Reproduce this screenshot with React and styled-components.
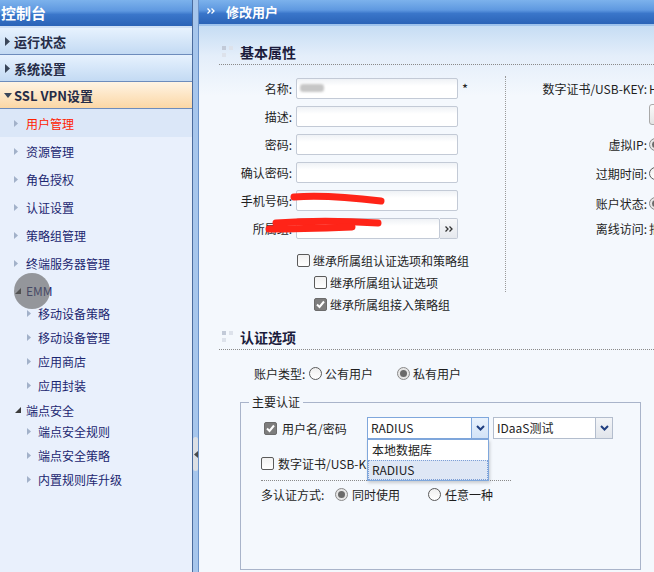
import React from "react";
import styled, { createGlobalStyle } from "styled-components";

const GlobalStyle = createGlobalStyle`
  html, body {
    margin: 0;
    padding: 0;
  }
  body {
    width: 654px;
    height: 572px;
    overflow: hidden;
    font-family: "Noto Sans CJK SC", "Noto Sans", sans-serif;
    font-size: 12px;
    color: #1e1e1e;
  }
  * {
    box-sizing: border-box;
  }
`;

const Page = styled.div`
  position: relative;
  display: flex;
  width: 654px;
  height: 572px;
  overflow: hidden;
`;

/* ---------- sidebar ---------- */

const Sidebar = styled.aside`
  width: 192px;
  flex: none;
  display: flex;
  flex-direction: column;
  background: #e9f0fc;
`;

const BarTitle = styled.div`
  height: 28px;
  padding-left: 1px;
  line-height: 25px;
  font-size: 15px;
  font-weight: bold;
  color: #fff;
  background: linear-gradient(to bottom, #7cb2ec 0%, #5e98e0 42%, #3a76ca 56%, #2a63b7 100%);
  border-bottom: 2px solid #cfe0f5;
`;

const TopItem = styled.div`
  height: 27px;
  display: flex;
  align-items: center;
  gap: ${(p) => (p.$open ? 2 : 4)}px;
  padding-left: ${(p) => (p.$open ? 4 : 5)}px;
  font-size: 13px;
  font-weight: bold;
  color: #252c47;
  border-bottom: 1px solid #6d8cbc;
  background: ${(p) =>
    p.$open
      ? "linear-gradient(to bottom, #fff4e4, #fbd7a5)"
      : "linear-gradient(to bottom, #e7f2fe, #c3daf3)"};
`;

const SubItem = styled.div`
  height: ${(p) => p.$h}px;
  display: flex;
  align-items: center;
  gap: ${(p) => p.$gap}px;
  padding-left: ${(p) => p.$indent}px;
  padding-top: ${(p) => p.$pt || 0}px;
  font-size: 12px;
  color: ${(p) => (p.$active ? "#ff2200" : "#1b2670")};
  background: ${(p) => (p.$active ? "#dbe7f8" : "transparent")};
`;

const Splitter = styled.div`
  width: 7px;
  flex: none;
  display: flex;
  flex-direction: column;
  background: #a7c6ec;
  border-left: 1px solid #4b6b9d;
  border-right: 1px solid #6c93c9;
`;

const Grip = styled.div`
  margin-top: 437px;
  height: 34px;
  display: flex;
  align-items: center;
  justify-content: center;
  background: #dcdfe4;
  border-radius: 3px;
`;

/* ---------- main ---------- */

const Main = styled.main`
  flex: 1;
  min-width: 0;
  display: flex;
  flex-direction: column;
  overflow: hidden;
  background: #f4f8fd;
`;

const MainHeader = styled.div`
  height: 26px;
  flex: none;
  display: flex;
  align-items: center;
  gap: 11px;
  padding: 0 0 2px 8px;
  font-size: 13px;
  font-weight: bold;
  color: #fff;
  background: linear-gradient(to bottom, #7cb2ec 0%, #5e98e0 42%, #3a76ca 56%, #2a63b7 100%);
  border-bottom: 2px solid #9fc3ec;
`;

const Content = styled.div`
  flex: 1;
  padding: 13px 0 0 20px;
  overflow: hidden;
  background: linear-gradient(to bottom, #c6ddf4 0px, #e4eefa 30px, #f4f8fd 70px, #f4f8fd 100%);
`;

const SectionHead = styled.div`
  height: 26px;
  margin-top: ${(p) => p.$mt || 0}px;
  display: flex;
  align-items: center;
  gap: 7px;
  padding-left: 3px;
  font-size: 14px;
  font-weight: bold;
  color: #1c1c3c;
  border-bottom: 1px dotted #8a8a8a;
`;

const Squares = styled.span`
  display: grid;
  grid-template-columns: 4px 4px;
  grid-template-rows: 4px 4px;
  gap: 3px;
  span:nth-child(1) {
    background: #c2cad8;
  }
  span:nth-child(2),
  span:nth-child(3) {
    background: #dde2eb;
  }
`;

const BasicBody = styled.div`
  display: flex;
  align-items: flex-start;
`;

const LeftCol = styled.div`
  width: 286px;
  flex: none;
  padding-top: 13px;
`;

const FormGrid = styled.div`
  display: grid;
  grid-template-columns: 73px 162px auto;
  grid-auto-rows: 21px;
  column-gap: 4px;
  row-gap: 7px;
  align-items: center;
`;

const Label = styled.span`
  text-align: right;
  white-space: nowrap;
`;

const Input = styled.input`
  width: 100%;
  height: 21px;
  min-width: 0;
  margin: 0;
  border: 1px solid #c3cad6;
  border-radius: 2px;
  background: linear-gradient(to bottom, #eff2f6, #ffffff 7px);
  outline: none;
`;

const Star = styled.span`
  font-size: 13px;
  color: #222;
`;

const GroupField = styled.div`
  display: flex;
  height: 21px;
`;

const PickBtn = styled.span`
  width: 18px;
  flex: none;
  display: flex;
  align-items: center;
  justify-content: center;
  border: 1px solid #c3cad6;
  border-left: none;
  border-radius: 0 2px 2px 0;
  background: linear-gradient(to bottom, #f7f8fa, #e6e9ee);
`;

const Checks = styled.div`
  margin-top: 10px;
`;

const CheckRow = styled.label`
  height: ${(p) => p.$h || 22}px;
  display: flex;
  align-items: center;
  gap: ${(p) => p.$gap || 3}px;
  padding-left: ${(p) => p.$indent}px;
  margin-top: ${(p) => p.$mt || 0}px;
  white-space: nowrap;
`;

const Box = styled.span`
  width: 13px;
  height: 13px;
  flex: none;
  display: flex;
  align-items: center;
  justify-content: center;
  border: 1px solid ${(p) => (p.$checked ? "#6c6c6c" : "#5a5a5a")};
  border-radius: 2px;
  background: ${(p) =>
    p.$checked ? "#7d7d7d" : "linear-gradient(to bottom, #f1f1f1, #ffffff)"};
`;

const Round = styled.span`
  width: 13px;
  height: 13px;
  flex: none;
  display: flex;
  align-items: center;
  justify-content: center;
  border: 1px solid ${(p) => (p.$checked ? "#8a8a8a" : "#5a5a5a")};
  border-radius: 50%;
  background: ${(p) =>
    p.$checked ? "#e6e6e6" : "linear-gradient(to bottom, #efefef, #ffffff)"};
  &::after {
    content: "";
    display: ${(p) => (p.$checked ? "block" : "none")};
    width: 7px;
    height: 7px;
    border-radius: 50%;
    background: #6a6a6a;
  }
`;

const RightCol = styled.div`
  width: 220px;
  flex: none;
  height: 216px;
  margin-top: 11px;
  padding-top: 2px;
  border-left: 1px dotted #9a9a9a;
`;

const RRow = styled.div`
  height: ${(p) => p.$h}px;
  display: grid;
  grid-template-columns: 141px auto;
  column-gap: 2px;
  align-items: center;
  white-space: nowrap;
`;

const MiniBtn = styled.span`
  width: 40px;
  height: 21px;
  border: 1px solid #a9a9a9;
  border-radius: 3px;
  background: linear-gradient(to bottom, #fafafa, #e4e4e4);
`;

const TypeRow = styled.div`
  height: 22px;
  margin-top: 12px;
  padding-left: 35px;
  display: flex;
  align-items: center;
`;

const FixedLabel = styled.span`
  width: ${(p) => p.$w}px;
  flex: none;
  white-space: nowrap;
`;

const Opt = styled.span`
  display: inline-flex;
  align-items: center;
  gap: ${(p) => p.$gap || 3}px;
  margin-left: ${(p) => p.$ml || 0}px;
  white-space: nowrap;
`;

const Fieldset = styled.fieldset`
  width: 401px;
  min-width: 0;
  margin: 10px 0 0 21px;
  padding: 7px 0 64px 0;
  border: 1px solid #a9b4ca;
`;

const Legend = styled.legend`
  margin-left: 8px;
  padding: 0 3px;
  font-size: 12px;
  line-height: 16px;
`;

const AuthRow = styled.div`
  height: 22px;
  display: flex;
  align-items: center;
  gap: 4px;
  padding-left: 23px;
`;

const Select = styled.div`
  position: relative;
  width: ${(p) => p.$w}px;
  height: 22px;
  flex: none;
  display: flex;
  border: 1px solid ${(p) => (p.$focus ? "#7fa7dc" : "#b3bdcd")};
  background: #fff;
`;

const SelectText = styled.span`
  flex: 1;
  padding-left: 3px;
  line-height: 20px;
  white-space: nowrap;
`;

const SelectBtn = styled.span`
  width: 17px;
  flex: none;
  display: flex;
  align-items: center;
  justify-content: center;
  border-left: 1px solid ${(p) => (p.$focus ? "#7fa7dc" : "#b3bdcd")};
  background: ${(p) =>
    p.$focus
      ? "linear-gradient(to bottom, #e9f2fd, #d2e3f7)"
      : "linear-gradient(to bottom, #f3f5f8, #e1e5eb)"};
`;

const DropList = styled.div`
  position: absolute;
  top: 21px;
  left: -1px;
  width: 122px;
  z-index: 3;
  border: 1px solid #7fa7dc;
  background: #fff;
  box-shadow: 1px 2px 3px rgba(0, 0, 0, 0.18);
`;

const DropItem = styled.div`
  height: 20px;
  padding-left: 3px;
  line-height: 18px;
  white-space: nowrap;
  border: 1px dotted ${(p) => (p.$active ? "#7c9fd6" : "transparent")};
  background: ${(p) => (p.$active ? "#dee7f5" : "#fff")};
`;

const Divider = styled.div`
  width: 250px;
  margin: 6px 0 0 20px;
  border-top: 1px dotted #8a8a8a;
`;

const Overlay = styled.svg`
  position: absolute;
  left: 0;
  top: 0;
  pointer-events: none;
`;

/* ---------- small drawings ---------- */

const TriRight = () => (
  <svg width="5" height="9" viewBox="0 0 5 9">
    <path d="M0 0 L5 4.5 L0 9Z" fill="#3a4659" />
  </svg>
);

const TriDown = () => (
  <svg width="8" height="5" viewBox="0 0 8 5">
    <path d="M0 0 H8 L4 5Z" fill="#3a4659" />
  </svg>
);

const Arrow = () => (
  <svg width="4" height="7" viewBox="0 0 4 7">
    <path d="M0 0 L4 3.5 L0 7Z" fill="#a2b1c9" />
  </svg>
);

const Corner = () => (
  <svg width="6" height="6" viewBox="0 0 6 6">
    <path d="M6 0 V6 H0Z" fill="#3c3c3c" />
  </svg>
);

const Tick = () => (
  <svg width="11" height="11" viewBox="0 0 11 11">
    <path d="M2 5.5 L4.5 8 L9 2.5" stroke="#fff" strokeWidth="2" fill="none" />
  </svg>
);

const Chevron = () => (
  <svg width="9" height="6" viewBox="0 0 9 6">
    <path d="M1 1 L4.5 4.5 L8 1" stroke="#1f3e80" strokeWidth="2" fill="none" />
  </svg>
);

const Double = ({ color }) => (
  <svg width="8" height="6" viewBox="0 0 8 6">
    <path d="M0.5 0.5 L3 3 L0.5 5.5 M4.5 0.5 L7 3 L4.5 5.5" stroke={color} strokeWidth="1.3" fill="none" />
  </svg>
);

const Check = ({ checked }) => <Box $checked={checked}>{checked && <Tick />}</Box>;

const level1 = ["资源管理", "角色授权", "认证设置", "策略组管理", "终端服务器管理"];
const emm = ["移动设备策略", "移动设备管理", "应用商店", "应用封装"];
const endpoint = ["端点安全规则", "端点安全策略", "内置规则库升级"];

export default function App() {
  return (
    <>
      <GlobalStyle />
      <Page>
        <Sidebar>
          <BarTitle>控制台</BarTitle>
          <TopItem>
            <TriRight />
            运行状态
          </TopItem>
          <TopItem>
            <TriRight />
            系统设置
          </TopItem>
          <TopItem $open>
            <TriDown />
            SSL VPN设置
          </TopItem>
          <SubItem $h={28} $indent={14} $gap={8} $active>
            <Arrow />
            用户管理
          </SubItem>
          {level1.map((t) => (
            <SubItem key={t} $h={28} $indent={14} $gap={8}>
              <Arrow />
              {t}
            </SubItem>
          ))}
          <SubItem $h={24} $pt={3} $indent={15} $gap={5}>
            <Corner />
            EMM
          </SubItem>
          {emm.map((t) => (
            <SubItem key={t} $h={24} $indent={27} $gap={7}>
              <Arrow />
              {t}
            </SubItem>
          ))}
          <SubItem $h={22} $pt={4} $indent={15} $gap={5}>
            <Corner />
            端点安全
          </SubItem>
          {endpoint.map((t) => (
            <SubItem key={t} $h={24} $indent={27} $gap={7}>
              <Arrow />
              {t}
            </SubItem>
          ))}
        </Sidebar>

        <Splitter>
          <Grip>
            <svg width="4" height="7" viewBox="0 0 4 7">
              <path d="M4 0 L0 3.5 L4 7Z" fill="#4a4a4a" />
            </svg>
          </Grip>
        </Splitter>

        <Main>
          <MainHeader>
            <Double color="#ffffff" />
            修改用户
          </MainHeader>
          <Content>
            <SectionHead>
              <Squares>
                <span />
                <span />
                <span />
                <span />
              </Squares>
              基本属性
            </SectionHead>
            <BasicBody>
              <LeftCol>
                <FormGrid>
                  <Label>名称:</Label>
                  <Input />
                  <Star>*</Star>
                  <Label>描述:</Label>
                  <Input />
                  <span />
                  <Label>密码:</Label>
                  <Input type="password" />
                  <span />
                  <Label>确认密码:</Label>
                  <Input type="password" />
                  <span />
                  <Label>手机号码:</Label>
                  <Input />
                  <span />
                  <Label>所属组:</Label>
                  <GroupField>
                    <Input />
                    <PickBtn>
                      <Double color="#333333" />
                    </PickBtn>
                  </GroupField>
                  <span />
                </FormGrid>
                <Checks>
                  <CheckRow $indent={78}>
                    <Check />
                    继承所属组认证选项和策略组
                  </CheckRow>
                  <CheckRow $indent={95}>
                    <Check />
                    继承所属组认证选项
                  </CheckRow>
                  <CheckRow $indent={95}>
                    <Check checked />
                    继承所属组接入策略组
                  </CheckRow>
                </Checks>
              </LeftCol>
              <RightCol>
                <RRow $h={20}>
                  <Label>数字证书/USB-KEY:</Label>
                  <span>HTTP</span>
                </RRow>
                <RRow $h={32}>
                  <span />
                  <MiniBtn />
                </RRow>
                <RRow $h={28}>
                  <Label>虚拟IP:</Label>
                  <Round $checked />
                </RRow>
                <RRow $h={30}>
                  <Label>过期时间:</Label>
                  <Round />
                </RRow>
                <RRow $h={31}>
                  <Label>账户状态:</Label>
                  <Round $checked />
                </RRow>
                <RRow $h={18}>
                  <Label>离线访问:</Label>
                  <span>拒绝</span>
                </RRow>
              </RightCol>
            </BasicBody>

            <SectionHead $mt={9}>
              <Squares>
                <span />
                <span />
                <span />
                <span />
              </Squares>
              认证选项
            </SectionHead>
            <TypeRow>
              <FixedLabel $w={55}>账户类型:</FixedLabel>
              <Opt>
                <Round />
                公有用户
              </Opt>
              <Opt $ml={24}>
                <Round $checked />
                私有用户
              </Opt>
            </TypeRow>

            <Fieldset>
              <Legend>主要认证</Legend>
              <AuthRow>
                <Opt $gap={5} style={{ width: 99 }}>
                  <Check checked />
                  用户名/密码
                </Opt>
                <Select $w={122} $focus>
                  <SelectText>RADIUS</SelectText>
                  <SelectBtn $focus>
                    <Chevron />
                  </SelectBtn>
                  <DropList>
                    <DropItem>本地数据库</DropItem>
                    <DropItem $active>RADIUS</DropItem>
                  </DropList>
                </Select>
                <Select $w={120}>
                  <SelectText>IDaaS测试</SelectText>
                  <SelectBtn>
                    <Chevron />
                  </SelectBtn>
                </Select>
              </AuthRow>
              <CheckRow $indent={20} $gap={4} $mt={13}>
                <Check />
                数字证书/USB-KEY
              </CheckRow>
              <Divider />
              <CheckRow as="div" $indent={20} $gap={0} $mt={2}>
                <FixedLabel $w={71}>多认证方式:</FixedLabel>
                <Opt $gap={4}>
                  <Round $checked />
                  同时使用
                </Opt>
                <Opt $gap={4} $ml={25}>
                  <Round />
                  任意一种
                </Opt>
              </CheckRow>
            </Fieldset>
          </Content>
        </Main>

        <Overlay width="654" height="572" viewBox="0 0 654 572">
          <defs>
            <filter id="soft" x="-50%" y="-50%" width="200%" height="200%">
              <feGaussianBlur stdDeviation="1.3" />
            </filter>
          </defs>
          <rect x="300" y="84" width="24" height="8" rx="3" fill="#c6c6c6" filter="url(#soft)" />
          <path d="M294 197 C 320 195, 356 198, 381 201" stroke="#ff2418" strokeWidth="7" fill="none" strokeLinecap="round" />
          <path d="M276 223 C 305 221, 345 221, 378 223" stroke="#ff2418" strokeWidth="7" fill="none" strokeLinecap="round" />
          <path d="M269 229 C 295 229, 325 228, 352 227" stroke="#ff2418" strokeWidth="7" fill="none" strokeLinecap="round" />
          <circle cx="32" cy="291" r="18" fill="rgba(95,95,95,0.62)" />
        </Overlay>
      </Page>
    </>
  );
}
